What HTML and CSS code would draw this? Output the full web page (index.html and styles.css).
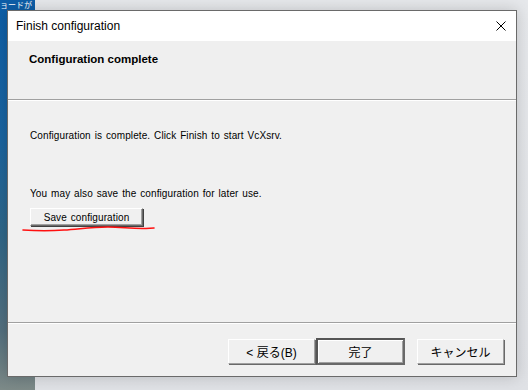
FILE: index.html
```html
<!DOCTYPE html>
<html lang="ja">
<head>
    <meta charset="UTF-8">
    <title>Finish configuration</title>
    <link rel="stylesheet" href="styles.css">
</head>
<body>
    <div class="desktop">
        <span class="desktop-label">ョードが</span>
    </div>

    <div class="dialog">
        <div class="titlebar">
            <span class="title">Finish configuration</span>
            <svg class="close" width="10" height="10" viewBox="0 0 10 10">
                <path d="M0.5 0.5 L9.5 9.5 M9.5 0.5 L0.5 9.5" stroke="#000" stroke-width="1" fill="none"/>
            </svg>
        </div>

        <div class="header">
            <h1 class="header-title">Configuration complete</h1>
        </div>
        <div class="separator"></div>

        <div class="content">
            <p class="line first">Configuration is complete. Click Finish to start VcXsrv.</p>
            <p class="line second">You may also save the configuration for later use.</p>
            <button class="save-button">Save configuration</button>
            <!-- 赤線のマーク -->
            <svg class="scribble" width="134" height="10" viewBox="0 0 134 10">
                <path d="M1 6 C 15 7, 30 7, 42 6 C 56 5.5, 66 3, 86 3 C 100 3, 110 5, 124 4.5 L 132 4" stroke="#ff1010" stroke-width="1.6" fill="none" stroke-linecap="round"/>
            </svg>
        </div>

        <div class="separator"></div>
        <div class="buttons">
            <button class="btn">&lt; 戻る(B)</button>
            <button class="btn default">完了</button>
            <button class="btn cancel">キャンセル</button>
        </div>
    </div>
</body>
</html>
```

FILE: styles.css
```css
* {
    margin: 0;
    padding: 0;
    box-sizing: border-box;
}

body {
    width: 528px;
    height: 390px;
    overflow: hidden;
    background: linear-gradient(180deg, #e6e8eb 0%, #dfe1e5 100%);
    font-family: 'Liberation Sans', Arial, 'Noto Sans CJK JP', sans-serif;
    position: relative;
}

.desktop {
    position: absolute;
    left: 0;
    top: 0;
    width: 35px;
    height: 390px;
    background: linear-gradient(180deg, #0d5ea8 0%, #1a64a0 35%, #2f6688 60%, #54707e 85%, #7d8a88 100%);
    overflow: hidden;
}

.desktop-label {
    position: absolute;
    left: 0;
    top: 0;
    color: #fff;
    font-size: 8px;
    line-height: 10px;
    font-family: 'Noto Sans CJK JP', sans-serif;
    white-space: nowrap;
}

.dialog {
    position: absolute;
    left: 7px;
    top: 10px;
    width: 510px;
    height: 367px;
    border: 1px solid #6a6a6a;
    background-color: #f0f0f0;
    box-shadow: 0 0 14px rgba(0, 0, 0, 0.18);
    display: flex;
    flex-direction: column;
}

.titlebar {
    height: 30px;
    background-color: #fff;
    display: flex;
    align-items: center;
    padding-left: 8px;
    padding-right: 10px;
}

.title {
    font-family: 'Liberation Sans', sans-serif;
    font-size: 12px;
    color: #000;
}

.close {
    margin-left: auto;
}

.header {
    height: 58px;
    background-color: #efefef;
    padding: 10px 0 0 21px;
}

.header-title {
    font-family: 'Liberation Sans', sans-serif;
    font-size: 11.5px;
    font-weight: bold;
    line-height: 16px;
    color: #000;
}

.separator {
    height: 2px;
    border-top: 1px solid #a0a0a0;
    border-bottom: 1px solid #fff;
}

.content {
    flex: 1;
    padding-left: 22px;
    position: relative;
    font-size: 10px;
    color: #000;
}

.line {
    line-height: 14px;
    letter-spacing: 0.1px;
    word-spacing: 1px;
}

.line.first {
    margin-top: 28px;
}

.line.second {
    margin-top: 44px;
}

.save-button {
    display: block;
    margin-top: 7px;
    width: 113px;
    height: 18px;
    background-color: #f0f0f0;
    border: 1px solid;
    border-color: #fff #6a6a6a #6a6a6a #fff;
    box-shadow: inset -1px -1px 0 #a0a0a0, 1px 1px 0 #404040;
    font-family: inherit;
    font-size: 10px;
    color: #000;
    letter-spacing: 0.1px;
    word-spacing: 1px;
}

.scribble {
    position: absolute;
    left: 14px;
    top: 123px;
}

.buttons {
    flex: 1;
    max-height: 52px;
    display: flex;
    justify-content: flex-end;
    align-items: flex-start;
    padding: 14px 12px 0 0;
}

.btn {
    width: 87px;
    height: 25px;
    margin-top: 1px;
    background-color: #f0f0f0;
    border: 1px solid;
    border-color: #fff #a0a0a0 #a0a0a0 #fff;
    box-shadow: 1px 1px 0 #696969;
    font-family: 'Liberation Sans', 'Noto Sans CJK JP', sans-serif;
    font-size: 12px;
    color: #000;
}

.btn.default {
    width: 89px;
    height: 27px;
    margin-top: 0;
    margin-left: 1px;
    border: 2px solid #696969;
    border-top-color: #555;
    border-left-color: #555;
    box-shadow: inset 1px 1px 0 #fff, inset -1px -1px 0 #a0a0a0;
}

.btn.cancel {
    margin-left: 12px;
}
```
